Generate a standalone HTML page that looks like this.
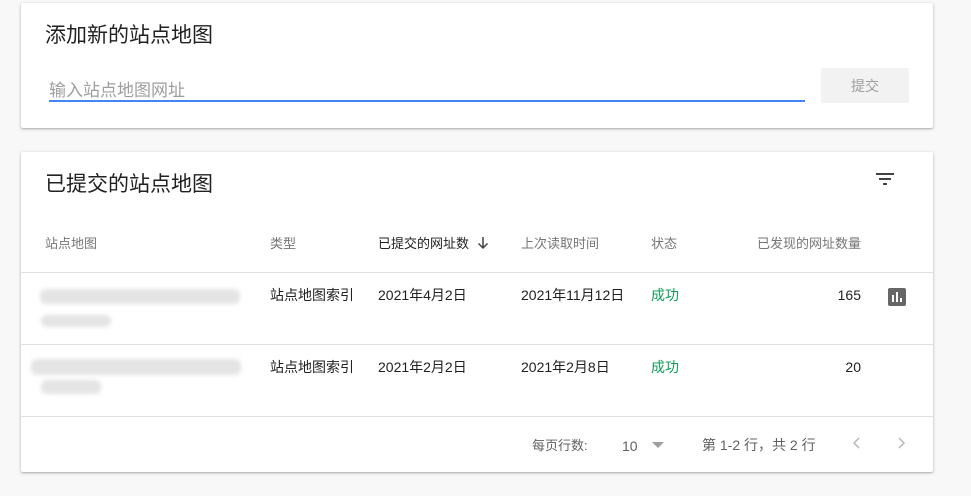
<!DOCTYPE html>
<html><head><meta charset="utf-8"><style>
*{margin:0;padding:0;box-sizing:border-box}
body{width:971px;height:496px;background:#f8f8f8;font-family:"Liberation Sans","Noto Sans CJK SC",sans-serif;position:relative;overflow:hidden;color:#212121;line-height:1.2}
.card{position:absolute;left:21px;width:912px;background:#fff;border-radius:2px;box-shadow:0 1px 3px rgba(0,0,0,.25),0 1px 1px rgba(0,0,0,.1)}
.a{position:absolute;white-space:nowrap}
.t{margin-top:2px}
.h{font-size:21px;color:#212121;margin-top:2px}
.th{font-size:13px;color:#757575;margin-top:2px}
.td{font-size:14px;color:#212121;margin-top:2px}
.line{position:absolute;left:0;width:912px;height:1px;background:#e0e0e0}
.blur{position:absolute;background:#e4e4e4;border-radius:6px;filter:blur(2px)}
</style></head><body>
<div class="card" style="top:3px;height:125px">
  <div class="a h" style="left:24px;top:18px">添加新的站点地图</div>
  <div class="a t" style="left:28px;top:76px;font-size:17px;color:#9e9e9e">输入站点地图网址</div>
  <div class="a" style="left:28px;top:97px;width:756px;height:2px;background:#4285f4"></div>
  <div class="a" style="left:800px;top:65px;width:88px;height:35px;background:#f2f2f2;border-radius:2px;color:#9e9e9e;font-size:14px;text-align:center;line-height:36px">提交</div>
</div>
<div class="card" style="top:152px;height:320px">
  <div class="a h" style="left:24px;top:18px">已提交的站点地图</div>
  <svg class="a" style="left:854px;top:20px" width="20" height="16" viewBox="0 0 20 16"><rect x="1" y="1" width="18" height="2" fill="#424242"/><rect x="4" y="6" width="12" height="2" fill="#424242"/><rect x="8" y="11" width="4" height="2" fill="#424242"/></svg>
  <div class="a th" style="left:24px;top:82px">站点地图</div>
  <div class="a th" style="left:249px;top:82px">类型</div>
  <div class="a th" style="left:357px;top:82px;color:#212121">已提交的网址数</div>
  <svg class="a" style="left:456px;top:84px" width="12" height="14" viewBox="0 0 12 14"><path d="M6 1 V12 M1.5 7.5 L6 12 L10.5 7.5" stroke="#424242" stroke-width="1.5" fill="none"/></svg>
  <div class="a th" style="left:500px;top:82px">上次读取时间</div>
  <div class="a th" style="left:630px;top:82px">状态</div>
  <div class="a th" style="right:72px;top:82px">已发现的网址数量</div>
  <div class="line" style="top:120px"></div>
  <div class="blur" style="left:19px;top:137px;width:200px;height:15px"></div>
  <div class="blur" style="left:20px;top:163px;width:70px;height:12px"></div>
  <div class="a td" style="left:249px;top:133px">站点地图索引</div>
  <div class="a td" style="left:357px;top:133px">2021年4月2日</div>
  <div class="a td" style="left:500px;top:133px">2021年11月12日</div>
  <div class="a td" style="left:630px;top:133px;color:#0f9d58">成功</div>
  <div class="a td" style="right:72px;top:133px">165</div>
  <svg class="a" style="left:867px;top:136px" width="18" height="18" viewBox="0 0 18 18"><rect width="18" height="18" rx="2" fill="#666"/><rect x="4" y="7" width="2" height="7" fill="#fff"/><rect x="8" y="4" width="2" height="10" fill="#fff"/><rect x="12" y="10" width="2" height="4" fill="#fff"/></svg>
  <div class="line" style="top:192px"></div>
  <div class="blur" style="left:10px;top:207px;width:210px;height:16px"></div>
  <div class="blur" style="left:20px;top:228px;width:60px;height:14px"></div>
  <div class="a td" style="left:249px;top:205px">站点地图索引</div>
  <div class="a td" style="left:357px;top:205px">2021年2月2日</div>
  <div class="a td" style="left:500px;top:205px">2021年2月8日</div>
  <div class="a td" style="left:630px;top:205px;color:#0f9d58">成功</div>
  <div class="a td" style="right:72px;top:205px">20</div>
  <div class="line" style="top:264px"></div>
  <div class="a t" style="left:511px;top:284px;font-size:13px;color:#616161">每页行数:</div>
  <div class="a t" style="left:601px;top:284px;font-size:14px;color:#616161">10</div>
  <div class="a" style="left:631px;top:290px;width:0;height:0;border-left:6px solid transparent;border-right:6px solid transparent;border-top:6px solid #9e9e9e"></div>
  <div class="a t" style="left:681px;top:283px;font-size:14px;color:#616161">第 1-2 行，共 2 行</div>
  <svg class="a" style="left:830px;top:284px" width="12" height="14" viewBox="0 0 12 14"><path d="M8 2 L3 7 L8 12" stroke="#bdbdbd" stroke-width="1.6" fill="none"/></svg>
  <svg class="a" style="left:874px;top:284px" width="12" height="14" viewBox="0 0 12 14"><path d="M4 2 L9 7 L4 12" stroke="#bdbdbd" stroke-width="1.6" fill="none"/></svg>
</div>
</body></html>
